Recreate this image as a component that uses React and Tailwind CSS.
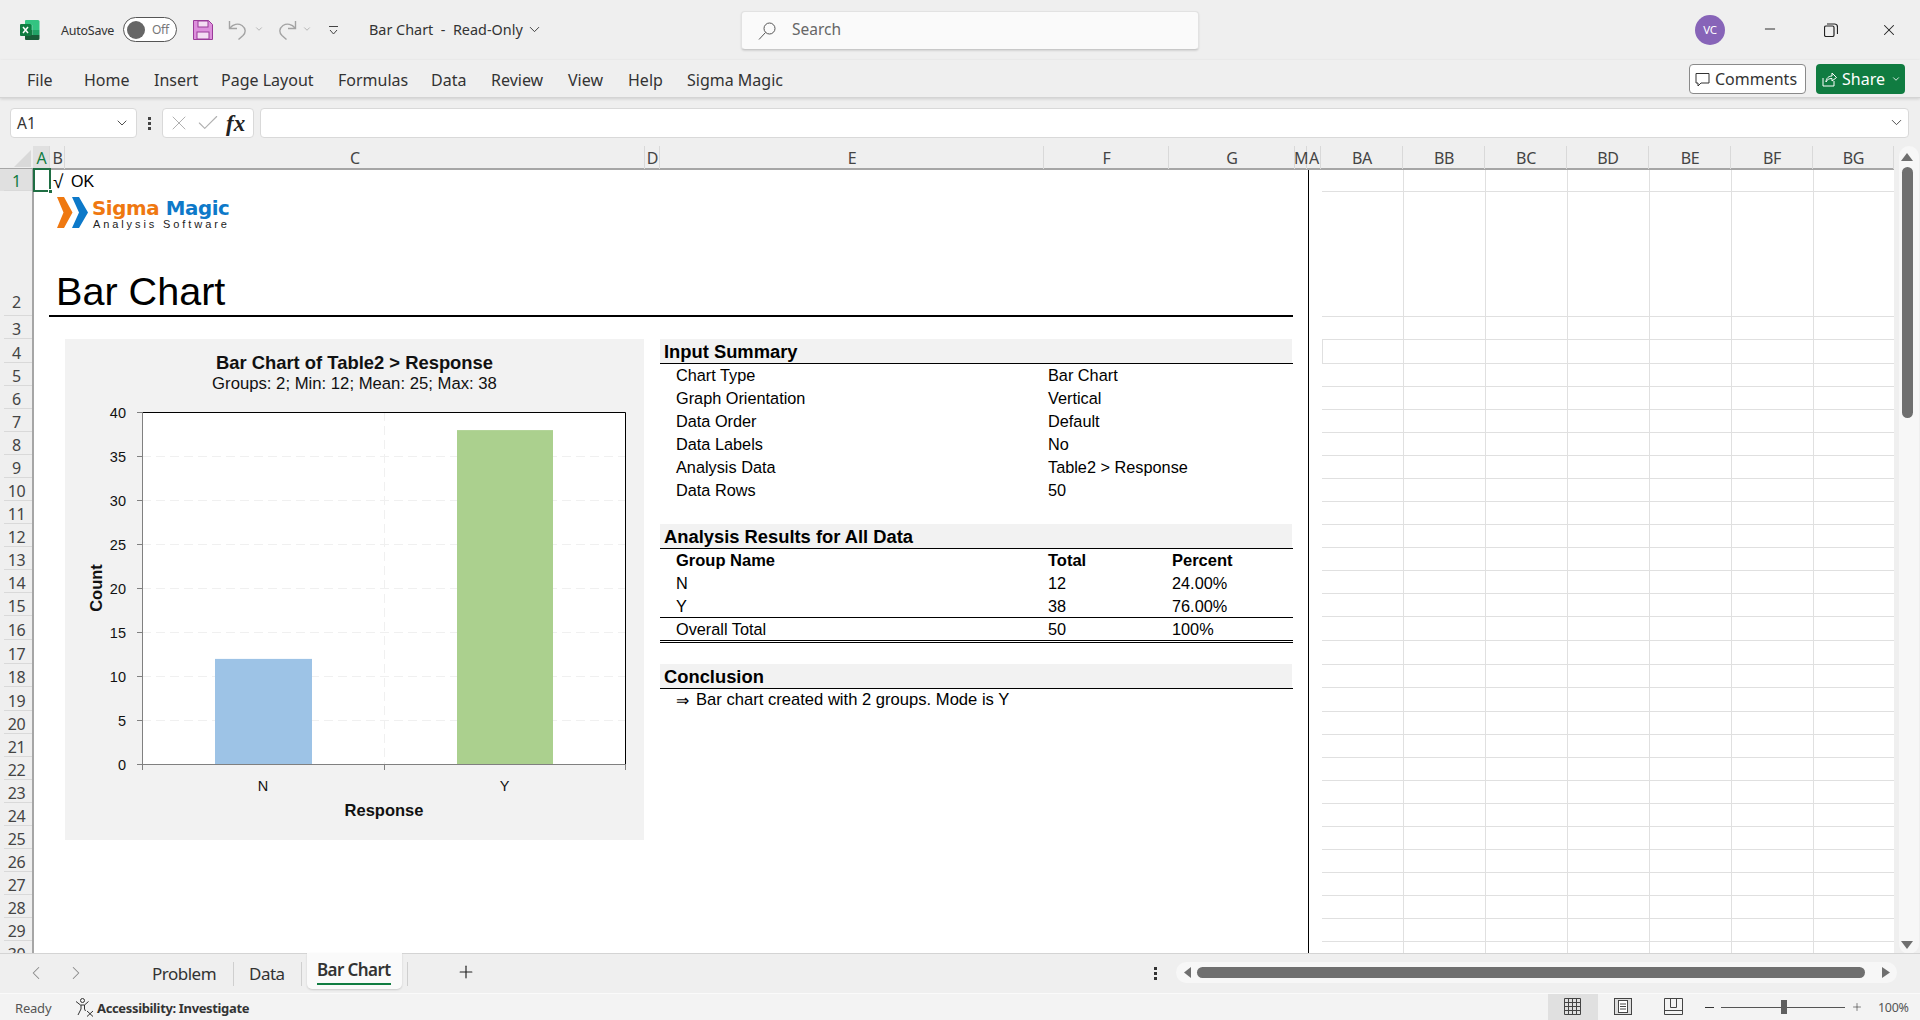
import React from "react";
import { ChevronDown, ChevronLeft, ChevronRight, Minus, Plus, X, Check } from "lucide-react";

const rowEdges = [169, 191, 316, 339, 363, 386, 409, 432, 455, 478, 501, 524, 547, 570, 593, 616, 640, 664, 687, 711, 734, 757, 780, 803, 826, 849, 872, 895, 918, 941, 964];

const columns = [
  ["A", 33, 50],
  ["B", 50, 65],
  ["C", 65, 645],
  ["D", 645, 660],
  ["E", 660, 1044],
  ["F", 1044, 1169],
  ["G", 1169, 1295],
  ["M", 1295, 1307],
  ["A", 1307, 1321],
  ["BA", 1321, 1403],
  ["BB", 1403, 1485],
  ["BC", 1485, 1567],
  ["BD", 1567, 1649],
  ["BE", 1649, 1731],
  ["BF", 1731, 1813],
  ["BG", 1813, 1894],
];

const tabs = [
  ["File", 27],
  ["Home", 84],
  ["Insert", 154],
  ["Page Layout", 221],
  ["Formulas", 338],
  ["Data", 431],
  ["Review", 491],
  ["View", 568],
  ["Help", 628],
  ["Sigma Magic", 687],
];

const inputRows = [
  ["Chart Type", "Bar Chart"],
  ["Graph Orientation", "Vertical"],
  ["Data Order", "Default"],
  ["Data Labels", "No"],
  ["Analysis Data", "Table2 > Response"],
  ["Data Rows", "50"],
];

const ExcelIcon = () => (
  <svg width="20" height="20" viewBox="0 0 20 20" className="absolute left-[20px] top-[20px]">
    <path d="M6 0h12a1.5 1.5 0 0 1 1.5 1.5V5H5V1a1 1 0 0 1 1-1z" fill="#33c481" />
    <rect x="5" y="5" width="7.5" height="5" fill="#21a366" />
    <rect x="12.5" y="5" width="7" height="5" fill="#33c481" />
    <rect x="5" y="10" width="7.5" height="5" fill="#107c41" />
    <rect x="12.5" y="10" width="7" height="5" fill="#21a366" />
    <path d="M5 15h14.5v3.5A1.5 1.5 0 0 1 18 20H6a1 1 0 0 1-1-1z" fill="#185c37" />
    <rect x="0" y="4" width="11" height="12" rx="1" fill="#107c41" />
    <path d="M3 7l5 6M8 7l-5 6" stroke="#fff" strokeWidth="1.5" />
  </svg>
);

const TitleBar = () => (
  <div className="absolute left-0 top-0 w-[1920px] h-[60px] text-[#333]">
    <ExcelIcon />
    <span className="absolute left-[61px] top-[22px] text-[12.5px] leading-[18px] tracking-[-0.25px]">AutoSave</span>
    <div className="absolute left-[123px] top-[17px] w-[54px] h-[25px] rounded-full border border-[#555] bg-white flex items-center">
      <div className="ml-[3px] w-[18px] h-[18px] rounded-full bg-[#666]" />
      <span className="ml-[7px] text-[12px] text-[#777] tracking-[-0.3px]">Off</span>
    </div>
    <svg width="20" height="20" viewBox="0 0 20 20" className="absolute left-[193px] top-[20px]">
      <path d="M0.5 0.5h15l4 4v15h-19z" fill="#dd8fdc" stroke="#9a3b99" />
      <rect x="5" y="1" width="10" height="6" fill="#f4dcf3" stroke="#9a3b99" />
      <rect x="4" y="12" width="12" height="7" fill="#f4dcf3" stroke="#9a3b99" />
    </svg>
    <svg width="20" height="20" viewBox="0 0 20 20" fill="none" stroke="#a3a3a3" strokeWidth="1.4" className="absolute left-[228px] top-[20px]">
      <path d="M1.500 1v7.500H9" />
      <path d="M2 8C5 4 10 3 14 5.500c4 3 4 7 1 10l-4.500 4" />
    </svg>
    <ChevronDown size={10} color="#aaa" className="absolute left-[254px] top-[24px]" />
    <svg width="20" height="20" viewBox="0 0 20 20" fill="none" stroke="#a3a3a3" strokeWidth="1.4" className="absolute left-[277px] top-[20px]">
      <path d="M18.500 1v7.500H11" />
      <path d="M18 8C15 4 10 3 6 5.500c-4 3-4 7-1 10l4.500 4" />
    </svg>
    <ChevronDown size={10} color="#aaa" className="absolute left-[302px] top-[24px]" />
    <svg width="11" height="11" viewBox="0 0 11 11" fill="none" stroke="#444" className="absolute left-[328px] top-[25px]">
      <path d="M1 1.500h9M2 5l3.500 4L9 5" />
    </svg>
    <span className="absolute left-[369px] top-[20px] text-[14.4px] leading-[20px] whitespace-pre">Bar Chart  -  Read-Only</span>
    <ChevronDown size={17} strokeWidth={1.3} className="absolute left-[526px] top-[21px]" />

    <div className="absolute left-[741px] top-[11px] w-[458px] h-[39px] rounded-[4px] bg-[#fafafa] border border-[#e2e2e2] border-b-[#c8c8c8] shadow-[0_1px_2px_rgba(0,0,0,0.12)] flex items-center">
      <svg width="18" height="18" viewBox="0 0 18 18" fill="none" stroke="#555" className="ml-[16px]">
        <circle cx="11.500" cy="6.500" r="5.500" />
        <path d="M7.500 10.500L1 17.500" />
      </svg>
      <span className="ml-[16px] -mt-[2px] text-[15.5px] text-[#666]">Search</span>
    </div>

    <div className="absolute left-[1695px] top-[15px] w-[30px] h-[30px] rounded-full bg-[#8764b8] flex items-center justify-center text-white text-[11.5px] tracking-[-0.2px]">VC</div>
    <Minus size={16} strokeWidth={1.4} color="#222" className="absolute left-[1762px] top-[21px]" />
    <svg width="14" height="14" viewBox="0 0 14 14" fill="none" stroke="#222" strokeWidth="1.2" className="absolute left-[1824px] top-[23px]">
      <rect x="0.500" y="3" width="9.500" height="10.500" rx="1.500" />
      <path d="M3 1h7.500A3 3 0 0 1 13.500 4v7" />
    </svg>
    <X size={18} strokeWidth={1.4} color="#222" className="absolute left-[1880px] top-[21px]" />
  </div>
);

const Ribbon = () => (
  <div className="absolute left-0 top-[60px] w-[1920px] h-[38px] border-b border-[#d4d4d4] shadow-[0_1px_3px_rgba(0,0,0,0.14)] bg-[#efefef] text-[#333]">
    {tabs.map(([label, left]) => (
      <span key={label} className="absolute top-[9px] text-[16px] leading-[22px]" style={{ left }}>
        {label}
      </span>
    ))}
    <div className="absolute left-[1689px] top-[4px] w-[117px] h-[30px] rounded-[4px] bg-white border border-[#8a8a8a] flex items-center">
      <svg width="15" height="15" viewBox="0 0 15 15" fill="none" stroke="#333" className="ml-[5px]">
        <path d="M1 1.500h13v9.500H6l-3 3v-3H1z" />
      </svg>
      <span className="ml-[5px] text-[16px]">Comments</span>
    </div>
    <div className="absolute left-[1816px] top-[4px] w-[89px] h-[30px] rounded-[4px] bg-[#107c41] flex items-center text-white">
      <svg width="15" height="16" viewBox="0 0 15 16" fill="none" stroke="#fff" className="ml-[6px]">
        <path d="M1 7v8h11v-5M4 11c0-4 3-6 6-6V2l4.500 4.500L10 10V7.500c-3 0-5 1-6 3.500z" />
      </svg>
      <span className="ml-[5px] text-[16px]">Share</span>
      <ChevronDown size={10} strokeWidth={2} className="ml-[6px]" />
    </div>
  </div>
);

const FormulaBar = () => (
  <div className="absolute left-0 top-[108px] w-[1920px] h-[30px]">
    <div className="absolute left-[10px] top-0 w-[127px] h-[30px] rounded-[4px] bg-white border border-[#d9d9d9] flex items-center justify-between px-[6px] text-[#333]">
      <span className="text-[15.5px] mt-[2px]">A1</span>
      <ChevronDown size={16} strokeWidth={1.3} />
    </div>
    <div className="absolute left-[148px] top-[9px] flex flex-col gap-[2px]">
      <div className="w-[3px] h-[3px] bg-[#444]" />
      <div className="w-[3px] h-[3px] bg-[#444]" />
      <div className="w-[3px] h-[3px] bg-[#444]" />
    </div>
    <div className="absolute left-[162px] top-0 w-[92px] h-[30px] rounded-[4px] bg-white border border-[#d9d9d9] flex items-center">
      <X size={24} strokeWidth={1} color="#b0b0b0" className="ml-[4px]" />
      <Check size={26} strokeWidth={1} color="#b0b0b0" className="ml-[4px]" />
      <span className="ml-[5px] [font-family:Liberation_Serif,serif] italic font-bold text-[23px] leading-none text-[#222]">fx</span>
    </div>
    <div className="absolute left-[260px] top-0 w-[1649px] h-[30px] rounded-[4px] bg-white border border-[#d9d9d9]">
      <ChevronDown size={17} strokeWidth={1.2} color="#333" className="absolute right-[3px] top-[5px]" />
    </div>
  </div>
);

const ColumnHeaders = () => (
  <div className="absolute left-0 top-[146px] w-[1894px] h-[24px] border-b-2 border-[#a6a6a6] text-[#444]">
    <svg width="17" height="17" className="absolute left-[14px] top-[4px]">
      <path d="M17 0v17H0z" fill="#d9d9d9" />
    </svg>
    {columns.map(([label, left, right], i) => (
      <div
        key={i}
        className={`absolute top-0 h-[23px] pl-[1px] flex items-center justify-center border-r border-[#d9d9d9] text-[16px] leading-none tracking-[-0.3px] ${i === 0 ? "bg-[#e0e0e0] text-[#107c41]" : ""}`}
        style={{ left, width: right - left }}
      >
        {label}
      </div>
    ))}
  </div>
);

const RowHeaders = () => (
  <div className="absolute left-0 top-[169px] w-[34px] h-[784px] overflow-hidden border-r-2 border-[#a6a6a6] text-[#444]">
    {rowEdges.slice(0, -1).map((top, i) => (
      <div
        key={i}
        className={`absolute left-0 w-[33px] flex items-end justify-center ${i === 0 ? "bg-[#e0e0e0] text-[#107c41]" : ""} ${i === 1 ? "pb-[4px]" : ""}`}
        style={{ top: top - 169, height: rowEdges[i + 1] - top }}
      >
        <span className="relative top-[2px] h-[23px] leading-[23px] text-[16px] tracking-[-0.4px]">{i + 1}</span>
        <div className="absolute left-[4px] right-0 bottom-0 h-px bg-[#d9d9d9]" />
      </div>
    ))}
  </div>
);

const RightGrid = () => (
  <div className="absolute left-[1322px] top-[170px] w-[572px] h-[783px] overflow-hidden">
    {rowEdges.slice(1).map((y) => (
      <div key={y} className="absolute left-0 w-[572px] h-px bg-[#e0e0e0]" style={{ top: y - 170 }} />
    ))}
    {[1403, 1485, 1567, 1649, 1731, 1813].map((x) => (
      <div key={x} className="absolute top-0 w-px h-[783px] bg-[#e0e0e0]" style={{ left: x - 1322 }} />
    ))}
    <div className="absolute left-0 top-[169px] w-px h-[24px] bg-[#e0e0e0]" />
  </div>
);

const Logo = () => (
  <div className="absolute left-[57px] top-[197px] w-[176px] h-[33px]">
    <svg width="31" height="31" viewBox="0 0 31 31" className="absolute left-0 top-0">
      <path d="M0 0h7l8.500 15.500L7 31H0l6.500-15.500z" fill="#ef7810" />
      <path d="M15 0h7l9 15.500L22 31h-7l7-15.500z" fill="#0d79c9" />
    </svg>
    <span className="absolute left-[35px] top-[2px] [font-family:DejaVu_Sans,sans-serif] font-bold text-[19.8px] leading-[20px] tracking-[-0.4px] whitespace-nowrap">
      <span className="text-[#ef7810]">Sigma</span> <span className="text-[#0d79c9]">Magic</span>
    </span>
    <span className="absolute left-[36px] top-[21px] [font-family:Liberation_Sans,sans-serif] text-[11px] leading-[12px] tracking-[2.9px] text-[#222] whitespace-nowrap">
      Analysis Software
    </span>
  </div>
);

const Chart = () => {
  const yFor = (v) => 764.5 - v * 8.8;
  return (
    <div className="absolute left-[65px] top-[339px] w-[579px] h-[501px] bg-[#f2f2f2]">
      <svg width="579" height="501" viewBox="65 339 579 501" className="[font-family:Liberation_Sans,sans-serif] text-[14.5px] fill-[#111]">
        <rect x="142" y="412" width="483" height="352" fill="#fff" />
        {[5, 10, 15, 20, 25, 30, 35].map((v) => (
          <line key={v} x1="142" x2="625" y1={yFor(v)} y2={yFor(v)} stroke="#f0f0f0" strokeDasharray="9 5" />
        ))}
        <line x1="384.500" x2="384.500" y1="412" y2="764" stroke="#f0f0f0" strokeDasharray="9 5" />
        <rect x="215" y={yFor(12)} width="97" height={12 * 8.8} fill="#9dc3e6" />
        <rect x="457" y={yFor(38)} width="96" height={38 * 8.8} fill="#abd08e" />
        <path d="M142 412.500H625.500V764" fill="none" stroke="#000" />
        <path d="M142.500 412V764.500H625.500" fill="none" stroke="#808080" />
        {[0, 5, 10, 15, 20, 25, 30, 35, 40].map((v) => (
          <g key={v}>
            <line x1="137" x2="142" y1={yFor(v)} y2={yFor(v)} stroke="#808080" />
            <text x="126" y={yFor(v) + 5} textAnchor="end">{v}</text>
          </g>
        ))}
        {[142.5, 384.5, 625.5].map((x) => (
          <line key={x} x1={x} x2={x} y1="764" y2="770" stroke="#808080" />
        ))}
        <text x="263" y="791" textAnchor="middle">N</text>
        <text x="504.500" y="791" textAnchor="middle">Y</text>
        <text x="384" y="816" textAnchor="middle" className="font-bold text-[16.5px]">Response</text>
        <text x="0" y="0" textAnchor="middle" transform="translate(102 588) rotate(-90)" className="font-bold text-[16.5px]">Count</text>
        <text x="354.500" y="368.500" textAnchor="middle" className="font-bold text-[18.4px]">Bar Chart of Table2 &gt; Response</text>
        <text x="354.500" y="388.500" textAnchor="middle" className="text-[16.7px]">Groups: 2; Min: 12; Mean: 25; Max: 38</text>
      </svg>
    </div>
  );
};

const SectionTitle = ({ children }) => (
  <div className="w-[633px] h-[25px] border-b border-black">
    <div className="w-[632px] h-[24px] bg-[#f2f2f2] pl-[4px] font-bold text-[18.35px] leading-[25px] text-black">{children}</div>
  </div>
);

const Row = ({ a, b, c, bold }) => (
  <div className={`flex h-[23px] items-center leading-none text-black ${bold ? "font-bold text-[16.5px]" : "text-[16.3px]"}`}>
    <span className="w-[388px] pl-[16px]">{a}</span>
    <span className="w-[124px]">{b}</span>
    {c && <span>{c}</span>}
  </div>
);

const Report = () => (
  <div className="absolute left-[660px] top-[339px] w-[633px] [font-family:Liberation_Sans,sans-serif]">
    <SectionTitle>Input Summary</SectionTitle>
    {inputRows.map(([a, b]) => (
      <div key={a} className="flex h-[23px] items-center text-[16.3px] leading-none text-black">
        <span className="w-[388px] pl-[16px]">{a}</span>
        <span>{b}</span>
      </div>
    ))}
    <div className="h-[22px]" />
    <SectionTitle>Analysis Results for All Data</SectionTitle>
    <Row bold a="Group Name" b="Total" c="Percent" />
    <Row a="N" b="12" c="24.00%" />
    <Row a="Y" b="38" c="76.00%" />
    <div className="h-[26px] border-t border-black border-b-[3px] border-b-black [border-bottom-style:double] -mt-px mb-[21px] flex items-center text-[16.3px] leading-none text-black">
      <span className="w-[388px] pl-[16px]">Overall Total</span>
      <span className="w-[124px]">50</span>
      <span>100%</span>
    </div>
    <SectionTitle>Conclusion</SectionTitle>
    <div className="flex h-[23px] items-center pl-[16px] text-[16.6px] leading-none text-black">
      <span className="w-[20px] text-[16px]">⇒</span>
      <span>Bar chart created with 2 groups. Mode is Y</span>
    </div>
  </div>
);

const SheetTabs = () => (
  <div className="absolute left-0 top-[953px] w-[1920px] h-[40px] text-[#333] border-t border-[#d4d4d4]">
    <ChevronLeft size={22} strokeWidth={1.1} color="#888" className="absolute left-[25px] top-[8px]" />
    <ChevronRight size={22} strokeWidth={1.1} color="#888" className="absolute left-[65px] top-[8px]" />
    <span className="absolute left-[152px] top-[8px] text-[17px] leading-[23px] tracking-[-0.5px]">Problem</span>
    <div className="absolute left-[233px] top-[8px] w-px h-[24px] bg-[#cfcfcf]" />
    <span className="absolute left-[249px] top-[8px] text-[17px] leading-[23px] tracking-[-0.5px]">Data</span>
    <div className="absolute left-[301px] top-[8px] w-px h-[24px] bg-[#cfcfcf]" />
    <div className="absolute left-[307px] top-[-1px] w-[95px] h-[36px] bg-[#fafafa] rounded-b-[5px] shadow-[0_1px_2px_rgba(0,0,0,0.15)]">
      <span className="absolute left-[10px] top-[5px] font-semibold text-[17px] leading-[23px] tracking-[-0.6px] whitespace-nowrap">Bar Chart</span>
      <div className="absolute left-[10px] top-[30px] w-[74px] h-[2px] bg-[#107c41]" />
    </div>
    <div className="absolute left-[407px] top-[8px] w-px h-[24px] bg-[#cfcfcf]" />
    <Plus size={20} strokeWidth={1.4} color="#222" className="absolute left-[456px] top-[8px]" />
    <div className="absolute left-[1154px] top-[13px] flex flex-col gap-[2px]">
      <div className="w-[3px] h-[3px] bg-[#333]" />
      <div className="w-[3px] h-[3px] bg-[#333]" />
      <div className="w-[3px] h-[3px] bg-[#333]" />
    </div>
    <div className="absolute left-[1176px] top-[8px] w-[721px] h-[21px] rounded-full bg-[#f7f7f7]">
      <svg width="7" height="11" className="absolute left-[8px] top-[5px]"><path d="M7 0v11L0 5.500z" fill="#6f6f6f" /></svg>
      <div className="absolute left-[21px] top-[5px] w-[668px] h-[11px] rounded-full bg-[#6f6f6f]" />
      <svg width="8" height="11" className="absolute left-[706px] top-[5px]"><path d="M0 0v11l8-5.500z" fill="#6f6f6f" /></svg>
    </div>
  </div>
);

const StatusBar = () => (
  <div className="absolute left-0 top-[993px] w-[1920px] h-[27px] bg-[#f3f3f3] border-t border-[#fafafa] text-[#333]">
    <span className="absolute left-[15px] top-[5px] text-[13px] leading-[18px] text-[#555] tracking-[-0.2px]">Ready</span>
    <svg width="19" height="19" viewBox="0 0 19 19" fill="none" stroke="#333" className="absolute left-[75px] top-[4px]">
      <circle cx="7.500" cy="2.500" r="2" />
      <path d="M1 3.500l4.500 3.500h4l4-3.500M6 7v4l-3 6M9.500 7v4l1 2" />
      <path d="M12 13l6 5.500M18 13l-6 5.500" />
    </svg>
    <span className="absolute left-[97px] top-[5px] font-bold text-[13px] leading-[18px] tracking-[-0.35px]">Accessibility: Investigate</span>

    <div className="absolute left-[1548px] top-0 w-[50px] h-[27px] bg-[#e0e0e0]" />
    <svg width="17" height="17" viewBox="0 0 17 17" fill="none" stroke="#444" className="absolute left-[1564px] top-[4px]">
      <path d="M.5.500h16v16H.5zM.5 4.500h16M.5 8.500h16M.5 12.500h16M4.500.500v16M8.500.500v16M12.500.500v16" />
    </svg>
    <svg width="18" height="17" viewBox="0 0 18 17" fill="none" stroke="#444" className="absolute left-[1614px] top-[4px]">
      <rect x=".5" y=".5" width="17" height="16" fill="#ddd" />
      <rect x="4.500" y="2.500" width="9" height="12" fill="#fff" />
      <path d="M6 6h6M6 8.500h6M6 11h6" />
    </svg>
    <svg width="19" height="17" viewBox="0 0 19 17" fill="none" stroke="#444" className="absolute left-[1664px] top-[4px]">
      <path d="M.5.500h18v16H.5zM6.500.500v9h6v-9M.5 12.500h18" />
    </svg>
    <div className="absolute left-[1705px] top-[13px] w-[9px] h-px bg-[#333]" />
    <div className="absolute left-[1721px] top-[13px] w-[124px] h-px bg-[#555]" />
    <div className="absolute left-[1781px] top-[6px] w-[6px] h-[14px] bg-[#5f5f5f]" />
    <Plus size={12} strokeWidth={1.2} className="absolute left-[1851px] top-[7px]" />
    <span className="absolute left-[1878px] top-[5px] text-[12.5px] leading-[18px] text-[#555] tracking-[-0.3px]">100%</span>
  </div>
);

export default function App() {
  return (
    <div className="relative w-[1920px] h-[1020px] overflow-hidden bg-[#efefef] [font-family:Noto_Sans,sans-serif]">
      <TitleBar />
      <Ribbon />
      <FormulaBar />
      <ColumnHeaders />
      {/* sheet area */}
      <div className="absolute left-[34px] top-[170px] w-[1860px] h-[783px] bg-white" />
      <RowHeaders />
      <RightGrid />
      <div className="absolute left-[1308px] top-[170px] w-px h-[783px] bg-black" />
      {/* selected cell */}
      <div className="absolute left-[33px] top-[168px] w-[18px] h-[24px] border-2 border-[#1f6e43]" />
      <div className="absolute left-[48px] top-[189px] w-[5px] h-[5px] bg-[#1f6e43] border border-white" />
      <div className="absolute left-[53px] top-[171px] h-[22px] flex items-center [font-family:Liberation_Sans,sans-serif] text-[16px] text-black">
        <span className="w-[18px] text-[19px]">√</span>
        <span>OK</span>
      </div>
      <Logo />
      <div className="absolute left-[56px] top-[268px] [font-family:Liberation_Sans,sans-serif] text-[39.6px] leading-[46px] text-black">Bar Chart</div>
      <div className="absolute left-[49px] top-[315px] w-[1244px] h-[2px] bg-black" />
      <Chart />
      <Report />
      {/* vertical scrollbar */}
      <div className="absolute left-[1899px] top-[146px] w-[20px] h-[808px] rounded-full bg-[#f7f7f7]" />
      <svg width="12" height="8" className="absolute left-[1901px] top-[153px]"><path d="M6 0l6 8H0z" fill="#6f6f6f" /></svg>
      <div className="absolute left-[1902px] top-[167px] w-[11px] h-[251px] rounded-full bg-[#6f6f6f]" />
      <svg width="12" height="8" className="absolute left-[1901px] top-[941px]"><path d="M6 8L0 0h12z" fill="#6f6f6f" /></svg>
      <SheetTabs />
      <StatusBar />
    </div>
  );
}
